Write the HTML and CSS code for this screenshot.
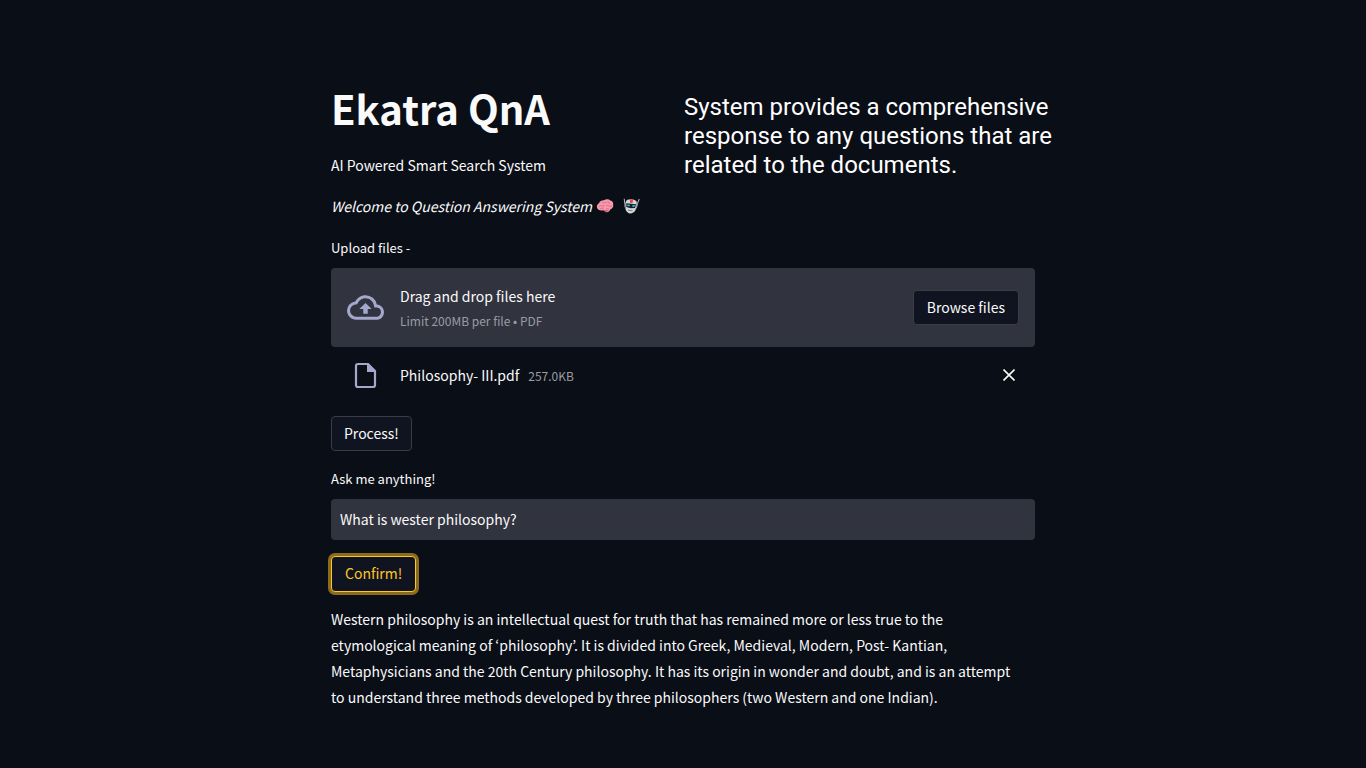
FILE: index.html
```html
<!DOCTYPE html>
<html lang="en">
<head>
<meta charset="utf-8">
<meta name="viewport" content="width=device-width, initial-scale=1">
<title>Ekatra QnA</title>
<link rel="stylesheet" href="styles.css">
</head>
<body>
<main class="page">
  <header class="header">
    <div class="intro">
      <h1 class="title">Ekatra QnA</h1>
      <p class="text">AI Powered Smart Search System</p>
    </div>
    <p class="note">System provides a comprehensive<br>response to any questions that are<br>related to the documents.</p>
  </header>

  <p class="text welcome">
    <em>Welcome to Question Answering System</em>
    <svg class="emoji" viewBox="0 0 18 16" role="img" aria-label="brain">
      <path d="M1 9.500C.4 7 2 5.700 3 5.200 3.500 3 6 2 8 2.200 10 .8 13 1 14.300 2.600 16.500 3 17.600 5 17.200 7 17.600 9 16 10.800 14.500 11.200 13.500 13.500 11.500 14.800 9.500 14 8.500 13.600 8.500 12.500 7 12.300 4.500 13 1.500 12 1 9.500Z" fill="#f59aab"/>
      <path d="M3 8.500q1.500-2 3-.5t2.500-1M6 4q1 1.500 2.500.8T11 5M12 3q-.5 2 2 2.500M10 8q1.500-1.500 3 0t3-.5M4 11q2-1.500 3.500-.5M10 11q1.500-1 3 0" fill="none" stroke="#d9667d" stroke-width=".8"/>
      <path d="M8 12q2 .8 5-.3-1 2-3.500 2.300Q8.500 13.500 8 12Z" fill="#c94b65"/>
    </svg>
    <svg class="emoji robot" viewBox="0 0 18 16" role="img" aria-label="robot">
      <g transform="rotate(6 9 8)">
        <path d="M1.500 1.500 2.500 6M16.500.2 14.800 6" stroke="#b9bcc0" stroke-width="1"/>
        <path d="M1.800 5h2v5H2.600ZM14 5h2l-1 5H14Z" fill="#8c9095"/>
        <path d="M3.500 4Q4 1.500 9 1.300 14 1.500 14.400 4L14 11.500Q12.500 15.200 8.500 15.500 4.500 14.500 3.700 11Z" fill="#d5d6d8"/>
        <path d="M7.300 1.300h3.200L10.200 4.800H7.600Z" fill="#e5483a"/>
        <path d="M4 5.800h9.800l-.6 3.700-4.200.8L4.500 9.500Z" fill="#172027"/>
        <path d="M5 6.800h2.800v1.700H5.300ZM10.200 6.800h2.800l-.4 1.700h-2.200Z" fill="#25c5ee"/>
        <path d="M6.500 12.500h4.500" stroke="#777c80" stroke-width="1"/>
      </g>
    </svg>
  </p>

  <form class="form">
    <section class="upload">
      <label class="label" for="browse">Upload files -</label>
      <div class="dropzone">
        <svg class="cloud" viewBox="0 0 24 24" aria-hidden="true"><path fill="currentColor" d="M19.350 10.040A7.490 7.490 0 0 0 12 4C9.110 4 6.600 5.640 5.350 8.040A5.994 5.994 0 0 0 0 14c0 3.310 2.690 6 6 6h13c2.760 0 5-2.240 5-5 0-2.640-2.050-4.780-4.650-4.960zM19 18H6c-2.210 0-4-1.790-4-4 0-2.050 1.530-3.760 3.560-3.970l1.070-.11.5-.95A5.469 5.469 0 0 1 12 6c2.620 0 4.880 1.860 5.390 4.430l.3 1.500 1.530.11A2.980 2.980 0 0 1 22 15c0 1.650-1.350 3-3 3zM8 13h2.550v3h2.900v-3H16l-4-4z"/></svg>
        <div class="drop-text">
          <span class="drop-title">Drag and drop files here</span>
          <small class="muted">Limit 200MB per file • PDF</small>
        </div>
        <button class="button" id="browse" type="button">Browse files</button>
      </div>
      <div class="file">
        <svg class="file-icon" viewBox="0 0 30 30" aria-hidden="true"><path d="M7 4H17l7 7v14a2 2 0 0 1-2 2H7a2 2 0 0 1-2-2V6a2 2 0 0 1 2-2Z" fill="none" stroke="currentColor" stroke-width="2.200"/><path d="M16 3.500v8.500h8.500V11L17.500 3.500Z" fill="currentColor"/></svg>
        <span class="file-name">Philosophy- III.pdf</span>
        <small class="muted">257.0KB</small>
        <button class="remove" type="button" aria-label="Remove file"><svg viewBox="0 0 12 12" aria-hidden="true"><path d="m.5.500 11 11M11.500.500.500 11.500" stroke="currentColor" stroke-width="1.600"/></svg></button>
      </div>
    </section>
    <button class="button" type="button">Process!</button>
    <div class="question">
      <label class="label" for="question">Ask me anything!</label>
      <input class="input" id="question" type="text" value="What is wester philosophy?">
    </div>
    <button class="button active" type="button">Confirm!</button>
  </form>

  <p class="text answer">Western philosophy is an intellectual quest for truth that has remained more or less true to the etymological meaning of ‘philosophy’. It is divided into Greek, Medieval, Modern, Post- Kantian, Metaphysicians and the 20th Century philosophy. It has its origin in wonder and doubt, and is an attempt to understand three methods developed by three philosophers (two Western and one Indian).</p>
</main>
</body>
</html>
```
FILE: styles.css
```css
* { box-sizing: border-box; }

body {
  margin: 0;
  background: #0a0e17;
  color: #fafafa;
  font-family: "Noto Sans CJK KR", "Noto Sans", sans-serif;
  font-size: 14px;
  line-height: 26px;
}

p, h1 { margin: 0; }

.page {
  max-width: 736px;
  margin: 0 auto;
  padding: 84px 16px 56px;
}

.header {
  display: flex;
  justify-content: space-between;
  align-items: flex-start;
}

.title {
  margin-bottom: 20px;
  font-size: 40px;
  line-height: 48px;
  font-weight: 700;
}

.note {
  flex: none;
  width: 384px;
  margin: 9px -33px 0 0;
  font-family: Roboto, sans-serif;
  font-size: 24px;
  line-height: 29px;
  color: #fff;
}

.welcome {
  display: flex;
  align-items: center;
  gap: 4px;
  margin-top: 13px;
}

.emoji { width: 18px; height: 16px; }
.robot { margin-left: 4px; }

.form {
  display: flex;
  flex-direction: column;
  align-items: flex-start;
  gap: 16px;
  margin-top: 17px;
}

.upload, .question { width: 100%; }

.label {
  display: block;
  margin-bottom: 8px;
  font-size: 13px;
  line-height: 24px;
}

.dropzone {
  display: flex;
  align-items: center;
  padding: 15px 16px;
  border-radius: 4px;
  background: #31333f;
}

.cloud {
  width: 37px;
  height: 37px;
  margin-right: 16px;
  color: #a3a8cc;
}

.drop-text {
  display: flex;
  flex: 1;
  flex-direction: column;
}

.drop-title { line-height: 26px; }

.muted {
  font-size: 12px;
  line-height: 23px;
  color: #9b9ca2;
}

.button {
  height: 35px;
  padding: 0 12px 2px;
  border: 1px solid #3a3c46;
  border-radius: 4px;
  background: #0f1420;
  color: inherit;
  font: inherit;
  line-height: 24px;
}

.dropzone .button, .active { padding: 0 13px 2px; }

.active {
  height: 36px;
  border-color: #ffc62b;
  color: #ffc62b;
  box-shadow: 0 0 0 3px #8b6c1f;
}

.file {
  display: flex;
  align-items: center;
  padding: 13px 16px 10px;
}

.file-icon {
  width: 30px;
  height: 30px;
  margin: 0 19px 0 4px;
  color: #a3a8cc;
}

.file-name { margin-right: 9px; }

.remove {
  display: flex;
  margin-left: auto;
  padding: 4px;
  border: 0;
  background: none;
  color: #fafafa;
}

.remove svg { width: 12px; height: 12px; }

.input {
  display: block;
  width: 100%;
  height: 41px;
  padding: 0 9px 2px;
  border: 0;
  border-radius: 4px;
  background: #31333f;
  color: inherit;
  font: inherit;
}

.answer {
  margin-top: 14px;
  padding-right: 16px;
}
```
